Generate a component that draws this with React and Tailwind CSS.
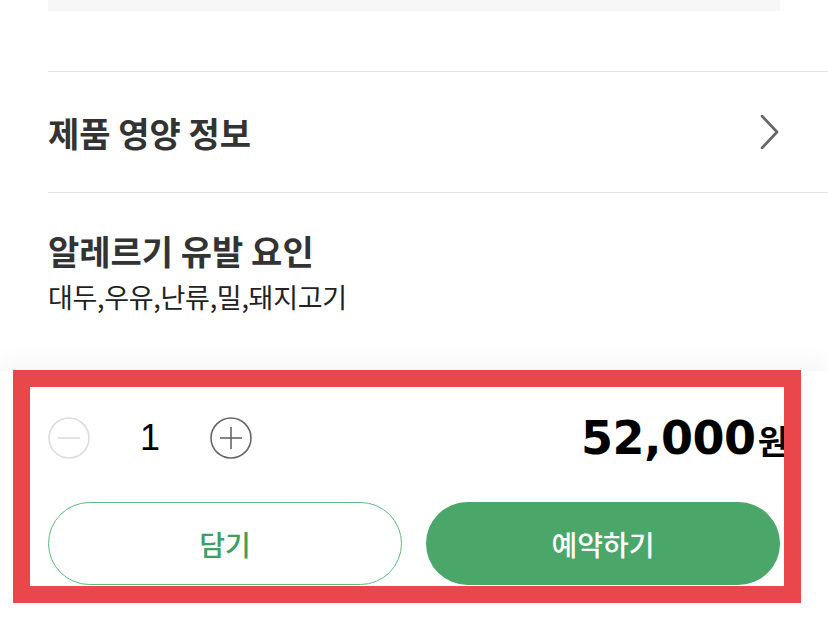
import React from 'react'

const KR = { fontFamily: '"Noto Sans CJK KR", "Noto Sans", sans-serif' }

const Chevron = () => (
  <svg width="20" height="34" viewBox="0 0 20 34" fill="none">
    <polyline points="2,1 17,17 2,33" stroke="#666" strokeWidth="2.6" strokeLinecap="round" strokeLinejoin="round" />
  </svg>
)

const CircleBtn = ({ plus, color }) => (
  <button type="button" className="flex h-[42px] w-[42px] items-center justify-center">
    <svg width="42" height="42" viewBox="0 0 42 42" fill="none">
      <circle cx="21" cy="21" r="20" stroke={color} strokeWidth="1.6" />
      <line x1="10" y1="21" x2="32" y2="21" stroke={color} strokeWidth="1.6" />
      {plus && <line x1="21" y1="10" x2="21" y2="32" stroke={color} strokeWidth="1.6" />}
    </svg>
  </button>
)

export default function App() {
  return (
    <div className="relative flex h-[619px] w-[828px] flex-col overflow-hidden bg-white" style={KR}>
      <div className="flex-1 overflow-hidden pl-12">
        <div className="mr-12 h-[11px] bg-[#f7f7f7]" />

        <div className="mt-[60px] border-t border-[#e3e3e3]" />
        <div className="flex h-[120px] items-center justify-between pr-12">
          <h3 className="text-[34px] font-bold text-[#333]">제품 영양 정보</h3>
          <Chevron />
        </div>
        <div className="border-t border-[#e3e3e3]" />

        <div className="pt-[32px]">
          <h3 className="text-[34px] font-bold leading-[52px] text-[#333]">알레르기 유발 요인</h3>
          <p className="text-[27px] leading-[40px] tracking-[-0.3px] text-[#222]">대두,우유,난류,밀,돼지고기</p>
        </div>
      </div>

      <div className="flex h-[248px] shrink-0 flex-col bg-white px-12 pt-[46px] shadow-[0_-12px_20px_rgba(0,0,0,0.035)]">
        <div className="flex h-[42px] items-center justify-between">
          <div className="flex items-center">
            <CircleBtn color="#dddddd" />
            <span className="w-[120px] text-center text-[36px] font-normal text-black" style={{ fontFamily: '"Liberation Sans", sans-serif' }}>1</span>
            <CircleBtn plus color="#666666" />
          </div>
          <div className="mr-[-8px] flex items-baseline text-black">
            <span className="text-[46px] font-bold tracking-[-0.5px]" style={{ fontFamily: '"DejaVu Sans", sans-serif' }}>52,000</span>
            <span className="ml-[2px] text-[33px] font-bold">원</span>
          </div>
        </div>

        <div className="mt-[43px] grid grid-cols-2 gap-6">
          <button type="button" className="flex h-[83px] items-center justify-center rounded-full border border-[#5dba80] bg-white text-[28px] font-medium text-[#3f9e60]">
            담기
          </button>
          <button type="button" className="flex h-[83px] items-center justify-center rounded-full bg-[#4ba66a] text-[28px] font-medium text-white">
            예약하기
          </button>
        </div>
      </div>

      <div className="pointer-events-none absolute left-[13px] top-[370px] h-[233px] w-[788px] border-[17px] border-[#e9474c]" />
    </div>
  )
}
